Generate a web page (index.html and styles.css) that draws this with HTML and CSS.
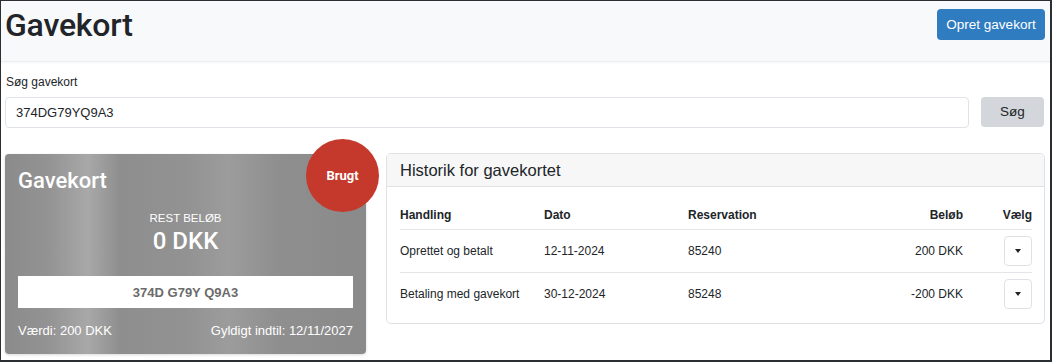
FILE: index.html
```html
<!DOCTYPE html>
<html lang="da">
<head>
<meta charset="utf-8">
<title>Gavekort</title>
<link rel="stylesheet" href="styles.css">
</head>
<body>
<div class="frame">
  <header class="topbar">
    <h1 class="page-title">Gavekort</h1>
    <button class="btn btn-primary">Opret gavekort</button>
  </header>

  <section class="search">
    <label class="search-label" for="q">Søg gavekort</label>
    <div class="search-row">
      <input id="q" class="search-input" type="text" value="374DG79YQ9A3">
      <button class="btn btn-secondary">Søg</button>
    </div>
  </section>

  <section class="content">
    <div class="giftcard">
      <div class="badge">Brugt</div>
      <div class="gc-title">Gavekort</div>
      <div class="gc-rest-label">REST BELØB</div>
      <div class="gc-amount">0 DKK</div>
      <div class="gc-code">374D G79Y Q9A3</div>
      <div class="gc-footer">
        <span>Værdi: 200 DKK</span>
        <span>Gyldigt indtil: 12/11/2027</span>
      </div>
    </div>

    <div class="history">
      <div class="history-head">Historik for gavekortet</div>
      <div class="history-body">
        <table class="htable">
          <thead>
            <tr>
              <th class="c-act">Handling</th>
              <th class="c-date">Dato</th>
              <th class="c-res">Reservation</th>
              <th class="c-amt">Beløb</th>
              <th class="c-sel">Vælg</th>
            </tr>
          </thead>
          <tbody>
            <tr>
              <td>Oprettet og betalt</td>
              <td>12-11-2024</td>
              <td>85240</td>
              <td class="c-amt">200 DKK</td>
              <td class="c-sel"><button class="dd"><span class="caret"></span></button></td>
            </tr>
            <tr>
              <td>Betaling med gavekort</td>
              <td>30-12-2024</td>
              <td>85248</td>
              <td class="c-amt">-200 DKK</td>
              <td class="c-sel"><button class="dd"><span class="caret"></span></button></td>
            </tr>
          </tbody>
        </table>
      </div>
    </div>
  </section>
</div>
</body>
</html>
```

FILE: styles.css
```css
* { box-sizing: border-box; }
html, body { margin: 0; padding: 0; }
body {
  font-family: "Liberation Sans", Arial, sans-serif;
  color: #212529;
  background: #fff;
}
.frame {
  width: 1052px;
  height: 362px;
  border: 1px solid #2b2f33;
  border-width: 1px 2px 2px 1px;
  overflow: hidden;
  background: #fff;
}
.topbar {
  height: 61px;
  background: #f8f9fa;
  border-bottom: 1px solid #eceef0;
  box-shadow: 0 1px 2px rgba(0,0,0,0.04);
  display: flex;
  justify-content: space-between;
  align-items: flex-start;
  padding: 0 5px 0 4px;
}
.page-title {
  margin: 4px 0 0 0;
  font-family: Roboto, "Liberation Sans", sans-serif;
  font-size: 32px;
  font-weight: 500;
  line-height: 40px;
  letter-spacing: -0.2px;
}
.btn {
  font-family: inherit;
  border: none;
  border-radius: 4px;
  cursor: pointer;
}
.btn-primary {
  margin-top: 8px;
  width: 108px;
  height: 31px;
  padding: 0;
  background: #2f7cc0;
  color: #fff;
  font-size: 13.5px;
}
.search {
  padding: 13px 6px 0 4px;
}
.search-label {
  display: block;
  font-size: 12px;
  margin-bottom: 8px;
  padding-left: 1px;
}
.search-row {
  display: flex;
  align-items: center;
  gap: 12px;
}
.search-input {
  flex: 1;
  height: 31px;
  border: 1px solid #dfe2e6;
  border-radius: 4px;
  padding: 0 10px;
  font-family: inherit;
  font-size: 13px;
  color: #212529;
}
.btn-secondary {
  width: 63px;
  height: 30px;
  margin-top: -2px;
  background: #d3d6da;
  color: #212529;
  font-size: 13.5px;
}
.content {
  display: flex;
  gap: 20px;
  padding: 25px 6px 0 4px;
  align-items: flex-start;
}
.giftcard {
  position: relative;
  width: 361px;
  height: 200px;
  margin-top: 1px;
  border-radius: 4px;
  color: #fff;
  padding: 14px 13px 0 13px;
  background: linear-gradient(90deg, #8b8b8b 0%, #939393 12%, #a8a8a8 23%, #8e8e8e 32%, #929292 50%, #9c9c9c 62%, #8f8f8f 75%, #8a8a8a 100%);
  box-shadow: 0 1px 3px rgba(0,0,0,0.15);
}
.badge {
  position: absolute;
  right: -13px;
  top: -15px;
  width: 73px;
  height: 73px;
  border-radius: 50%;
  background: #c4392c;
  color: #fff;
  font-family: Roboto, "Liberation Sans", sans-serif;
  font-weight: 700;
  font-size: 13px;
  display: flex;
  align-items: center;
  justify-content: center;
}
.gc-title {
  font-family: Roboto, "Liberation Sans", sans-serif;
  font-weight: 500;
  font-size: 22px;
  line-height: 26px;
}
.gc-rest-label {
  text-align: center;
  font-size: 11.5px;
  margin-top: 17px;
  line-height: 14px;
}
.gc-amount {
  text-align: center;
  font-family: Roboto, "Liberation Sans", sans-serif;
  font-size: 24px;
  font-weight: 500;
  line-height: 28px;
  margin-top: 2px;
}
.gc-code {
  margin-top: 21px;
  height: 32px;
  background: #fff;
  color: #6b6b6b;
  font-weight: 700;
  font-size: 13px;
  display: flex;
  align-items: center;
  justify-content: center;
}
.gc-footer {
  margin-top: 15px;
  display: flex;
  justify-content: space-between;
  font-size: 13px;
}
.history {
  flex: 1;
  border: 1px solid #dfe1e4;
  border-radius: 5px;
  overflow: hidden;
  height: 171px;
  margin-right: -1px;
}
.history-head {
  background: #f7f7f7;
  border-bottom: 1px solid #dfe1e4;
  height: 33px;
  padding: 0 13px;
  font-size: 16.5px;
  display: flex;
  align-items: center;
}
.history-body {
  padding: 14px 12px 0 13px;
}
.htable {
  width: 100%;
  border-collapse: collapse;
  font-size: 12px;
}
.htable th {
  font-weight: 700;
  text-align: left;
  height: 28px;
  border-bottom: 1px solid #e3e5e8;
  padding: 0;
  vertical-align: middle;
}
.htable td {
  height: 43px;
  padding: 0;
  vertical-align: middle;
}
.htable tbody tr + tr td { border-top: 1px solid #e3e5e8; }
.c-act { width: 144px; }
.c-date { width: 144px; }
.htable .c-amt { text-align: right; }
.htable .c-sel { text-align: right; width: 69px; }
.dd {
  width: 28px;
  height: 30px;
  border: 1px solid #dfe1e4;
  border-radius: 4px;
  background: #fff;
  display: inline-flex;
  align-items: center;
  justify-content: center;
  padding: 0;
  vertical-align: middle;
}
.caret {
  width: 0;
  height: 0;
  border-left: 3.5px solid transparent;
  border-right: 3.5px solid transparent;
  border-top: 4px solid #222;
}
```
